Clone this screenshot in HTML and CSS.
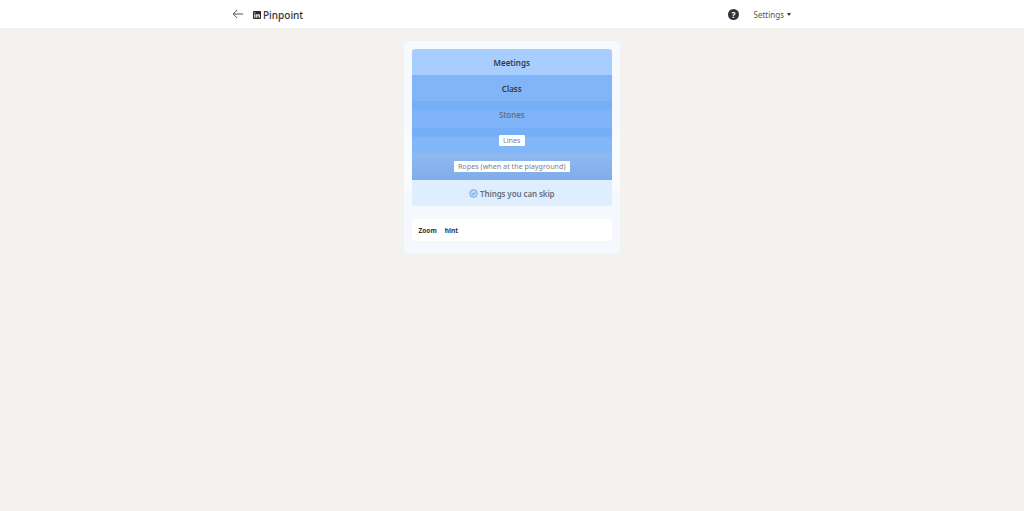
FILE: index.html
```html
<!DOCTYPE html>
<html lang="en">
<head>
    <meta charset="UTF-8">
    <title>Pinpoint</title>
    <link rel="stylesheet" href="styles.css">
</head>
<body>
    <header class="topbar">
        <div class="topbar-inner">
            <div class="brand">
                <svg class="back-icon" viewBox="0 0 14 12" width="12" height="10">
                    <path d="M13 6H1.500M6 1.200 1.200 6 6 10.800" fill="none" stroke="#444" stroke-width="1.100"/>
                </svg>
                <svg class="logo-icon" viewBox="0 0 10 10" width="8" height="8">
                    <path fill-rule="evenodd" fill="#2b2b2b" d="M1 0h8a1 1 0 0 1 1 1v8a1 1 0 0 1-1 1H1a1 1 0 0 1-1-1V1a1 1 0 0 1 1-1zM1.500 4v4.500H3V4zM2.250 1.500a.8.8 0 1 0 0 1.600.8.8 0 0 0 0-1.600zM4 4v4.500h1.500V6.200c0-1.200 1.600-1.300 1.600 0v2.300h1.500V5.800C8.600 3.600 6.200 3.600 5.500 4.700V4z"/>
                </svg>
                <span class="brand-name">Pinpoint</span>
            </div>
            <div class="actions">
                <span class="help-icon">?</span>
                <span class="settings">Settings<span class="caret"></span></span>
            </div>
        </div>
    </header>

    <main class="content">
        <section class="card">
            <div class="rows">
                <div class="row row-meetings"><span class="row-title">Meetings</span></div>
                <div class="row row-class"><span class="row-title">Class</span></div>
                <div class="row row-stones"><span class="row-title faded">Stones</span></div>
                <div class="row row-lines"><span class="tag">Lines</span></div>
                <div class="row row-ropes"><span class="tag">Ropes (when at the playground)</span></div>
                <div class="row row-skip">
                    <svg viewBox="0 0 10 10" width="9" height="9">
                        <circle cx="5" cy="5" r="4.300" fill="#bcd9f7" stroke="#6fa3dc" stroke-width="1"/>
                        <path d="M3.200 5.100 4.500 6.400 6.900 3.700" fill="none" stroke="#4f86c6" stroke-width="1"/>
                    </svg>
                    <span class="row-title faded">Things you can skip</span>
                </div>
            </div>
            <div class="hint">
                <span>Zoom</span>
                <span>hint</span>
            </div>
        </section>
    </main>
</body>
</html>
```

FILE: styles.css
```css
body {
    font-family: "Noto Sans", sans-serif;
    background-color: #f4f2ee;
    margin: 0;
    height: 511px;
    overflow: hidden;
}

.topbar {
    background-color: #fff;
    height: 29px;
    border-bottom: 1px solid #f0eeea;
    box-sizing: border-box;
}

.topbar-inner {
    width: 568px;
    margin-left: 232px;
    height: 100%;
    display: flex;
    justify-content: space-between;
    align-items: center;
}

.brand {
    display: flex;
    align-items: center;
}

.back-icon {
    margin-right: 9px;
}

.logo-icon {
    margin-right: 2px;
    margin-top: 1px;
}

.brand-name {
    font-size: 10px;
    font-weight: 500;
    color: #333;
    padding-top: 1px;
}

.actions {
    display: flex;
    align-items: center;
    gap: 14.500px;
    margin-right: 9px;
}

.help-icon {
    width: 11px;
    height: 11px;
    border-radius: 50%;
    background-color: #333;
    color: #fff;
    font-size: 8.500px;
    font-weight: 700;
    line-height: 11px;
    text-align: center;
}

.settings {
    font-size: 8px;
    color: #555;
    display: flex;
    align-items: center;
    padding-top: 1px;
}

.caret {
    margin-left: 3px;
    border-left: 2.500px solid transparent;
    border-right: 2.500px solid transparent;
    border-top: 3px solid #333;
}

.content {
    display: flex;
    justify-content: center;
    padding-top: 12px;
}

.card {
    width: 216px;
    height: 213px;
    box-sizing: border-box;
    padding: 8px 8px 8px 7.500px;
    background: linear-gradient(#f6faff 0 92px, #f9fcff 92px 150px, #f5f9fd 150px);
    border-radius: 4px;
}

.rows {
    border-radius: 3px;
    overflow: hidden;
}

.row {
    height: 26.200px;
    display: flex;
    justify-content: center;
    align-items: center;
    gap: 2px;
}

.row-title {
    font-size: 8px;
    font-weight: 600;
    color: #333a48;
}

.row-title.faded {
    color: #667080;
    letter-spacing: -0.100px;
}

.row-meetings {
    background-color: #a8cdff;
}

.row-class {
    background-color: #80b6f8;
}

.row-stones {
    background: linear-gradient(#74aff7 0 30%, #7fb5f8 40% 100%);
}

.row-lines {
    background: linear-gradient(#74aff7 0 30%, #81b6f8 40% 100%);
}

.row-ropes {
    background: linear-gradient(#8fb9ee, #7facea);
}

.row-skip {
    background-color: #deeeff;
}

.tag {
    background-color: #fff;
    color: #7f7f7f;
    font-size: 7.200px;
    line-height: 11px;
    padding: 0 4px;
    border-radius: 1px;
}

.hint {
    margin-top: 13px;
    margin-right: 0.500px;
    height: 22px;
    background-color: #fff;
    border-radius: 3px;
    display: flex;
    align-items: center;
    gap: 8px;
    padding-left: 7px;
    font-size: 6.500px;
    font-weight: 700;
    color: #333;
}
```
